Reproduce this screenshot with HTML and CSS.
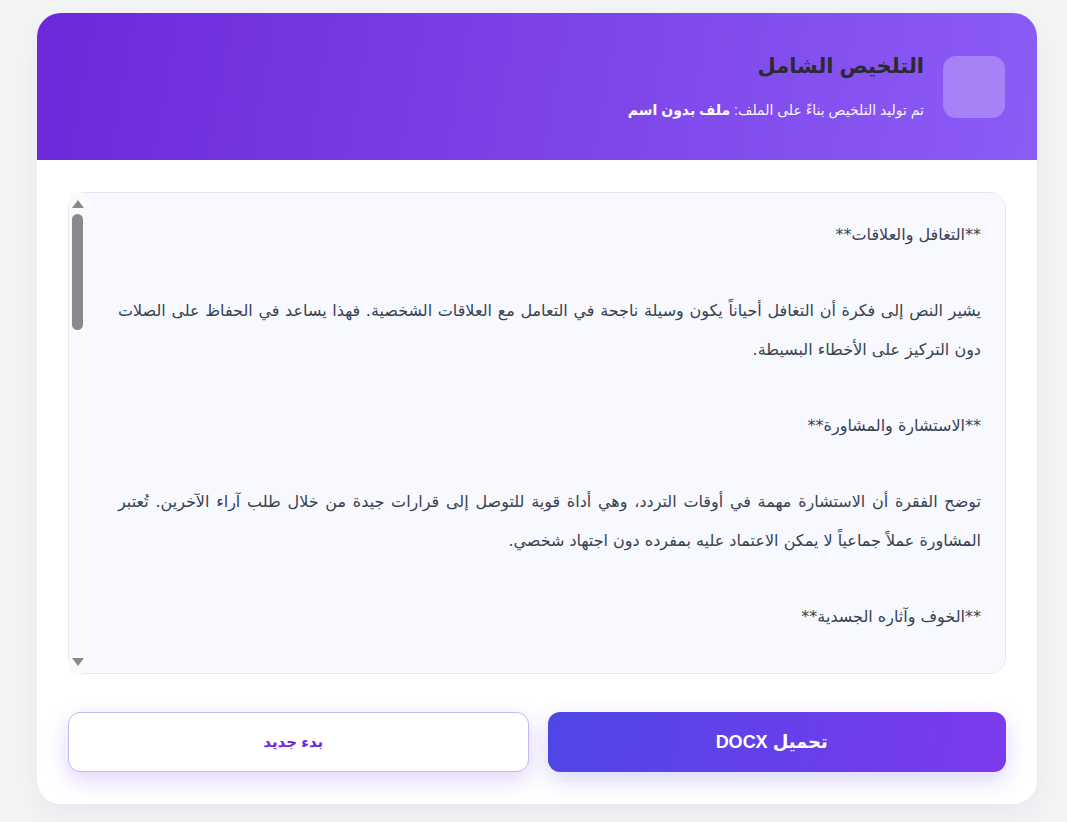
FILE: index.html
```html
<!DOCTYPE html>
<html dir="rtl">
<head>
<meta charset="utf-8">
<title>التلخيص الشامل</title>
<link rel="stylesheet" href="styles.css">
</head>
<body>
<div class="page">
  <div class="card">
    <header class="card-header">
      <div class="header-icon"></div>
      <div class="header-text">
        <h1 class="title">التلخيص الشامل</h1>
        <p class="subtitle">تم توليد التلخيص بناءً على الملف: <strong>ملف بدون اسم</strong></p>
      </div>
    </header>
    <main class="card-body">
      <div class="summary-wrap">
        <div class="summary">**التغافل والعلاقات**

يشير النص إلى فكرة أن التغافل أحياناً يكون وسيلة ناجحة في التعامل مع العلاقات الشخصية. فهذا يساعد في الحفاظ على الصلات دون التركيز على الأخطاء البسيطة.

**الاستشارة والمشاورة**

توضح الفقرة أن الاستشارة مهمة في أوقات التردد، وهي أداة قوية للتوصل إلى قرارات جيدة من خلال طلب آراء الآخرين. تُعتبر المشاورة عملاً جماعياً لا يمكن الاعتماد عليه بمفرده دون اجتهاد شخصي.

**الخوف وآثاره الجسدية**

يتناول النص تأثير الخوف على الإنسان، وكيف يمكن أن ينعكس على صحته الجسدية والنفسية إذا لم يتم التعامل معه بحكمة ووعي.

**الصبر والتأني**

يؤكد النص أن الصبر من أهم الصفات التي تساعد الإنسان على تجاوز الصعوبات، وأن التأني في اتخاذ القرارات يقلل من الوقوع في الأخطاء.

**الثقة بالنفس**

تبين الفقرة أن الثقة بالنفس أساس النجاح، وأنها تنمو بالتجربة والممارسة والتعلم من الأخطاء السابقة.

**الخلاصة**

يجمع النص بين مجموعة من القيم الإنسانية التي تساعد على بناء شخصية متوازنة وعلاقات صحية ومستقرة.</div>
        <div class="scrollbar" aria-hidden="true">
          <span class="sb-arrow sb-up"></span>
          <span class="sb-track"><span class="sb-thumb"></span></span>
          <span class="sb-arrow sb-down"></span>
        </div>
      </div>
      <div class="actions">
        <button class="btn btn-primary" type="button">تحميل DOCX</button>
        <button class="btn btn-secondary" type="button">بدء جديد</button>
      </div>
    </main>
  </div>
</div>
</body>
</html>
```
FILE: styles.css
```css
* { box-sizing: border-box; }
html, body { margin: 0; padding: 0; }
body {
  background: #f3f4f6;
  font-family: "Liberation Sans", "DejaVu Sans", sans-serif;
  color: #374151;
}
.page {
  padding: 13px 30px 18px 37px;
}
.card {
  width: 1000px;
  background: #ffffff;
  border-radius: 24px;
  overflow: hidden;
  box-shadow: 0 10px 30px rgba(17, 24, 39, 0.05);
}
.card-header {
  display: flex;
  align-items: center;
  gap: 19px;
  padding: 40px 32px;
  height: 147px;
  background: linear-gradient(100deg, #6d28d9 0%, #8b5cf6 100%);
}
.header-icon {
  width: 62px;
  height: 62px;
  flex: none;
  border-radius: 13px;
  background: rgba(255, 255, 255, 0.25);
}
.header-text {
  display: flex;
  flex-direction: column;
  gap: 21px;
}
.title {
  margin: 0;
  font-size: 21px;
  line-height: 26px;
  font-weight: 700;
  color: #2a2a35;
}
.subtitle {
  margin: 0;
  font-size: 14px;
  line-height: 20px;
  color: rgba(255, 255, 255, 0.95);
}
.subtitle strong {
  color: #ffffff;
  font-weight: 700;
}
.card-body {
  padding: 32px 31px 32px 31px;
}
.summary-wrap {
  position: relative;
}
.summary {
  height: 482px;
  overflow-y: auto;
  scrollbar-width: none;
  white-space: pre-wrap;
  text-align: justify;
  background: #f8f9ff;
  border: 1px solid #e6e4f7;
  border-radius: 16px;
  padding: 23px 24px 23px 49px;
  font-family: "DejaVu Sans", sans-serif;
  font-size: 16px;
  line-height: 38.2px;
  color: #374151;
}
.scrollbar {
  position: absolute;
  left: 1px;
  top: 1px;
  bottom: 1px;
  width: 17px;
  background: #fafafa;
  display: flex;
  flex-direction: column;
  align-items: center;
}
.sb-arrow {
  flex: none;
  width: 0;
  height: 0;
  border-left: 6px solid transparent;
  border-right: 6px solid transparent;
}
.sb-up {
  margin-top: 7px;
  border-bottom: 8px solid #8a8a8a;
}
.sb-down {
  margin-bottom: 7px;
  border-top: 8px solid #8a8a8a;
}
.sb-track {
  flex: 1;
  width: 100%;
  padding: 6px 0 0;
  display: flex;
  justify-content: center;
}
.sb-thumb {
  width: 11px;
  height: 116px;
  border-radius: 6px;
  background: #8a8a8a;
}
.actions {
  display: flex;
  gap: 19px;
  margin-top: 38px;
}
.btn {
  flex: 1;
  height: 60px;
  border-radius: 12px;
  padding: 0 10px 0 0;
  font-family: "Liberation Sans", "DejaVu Sans", sans-serif;
  font-weight: 700;
  cursor: pointer;
}
.btn-primary {
  border: none;
  color: #ffffff;
  font-size: 18px;
  background: linear-gradient(100deg, #4f46e5 0%, #7c3aed 100%);
  box-shadow: 0 8px 22px rgba(79, 70, 229, 0.22);
}
.btn-secondary {
  border: 1px solid #c9b5fb;
  background: #ffffff;
  color: #6d28d9;
  font-size: 15px;
  box-shadow: 0 8px 22px rgba(124, 58, 237, 0.22);
}
```
